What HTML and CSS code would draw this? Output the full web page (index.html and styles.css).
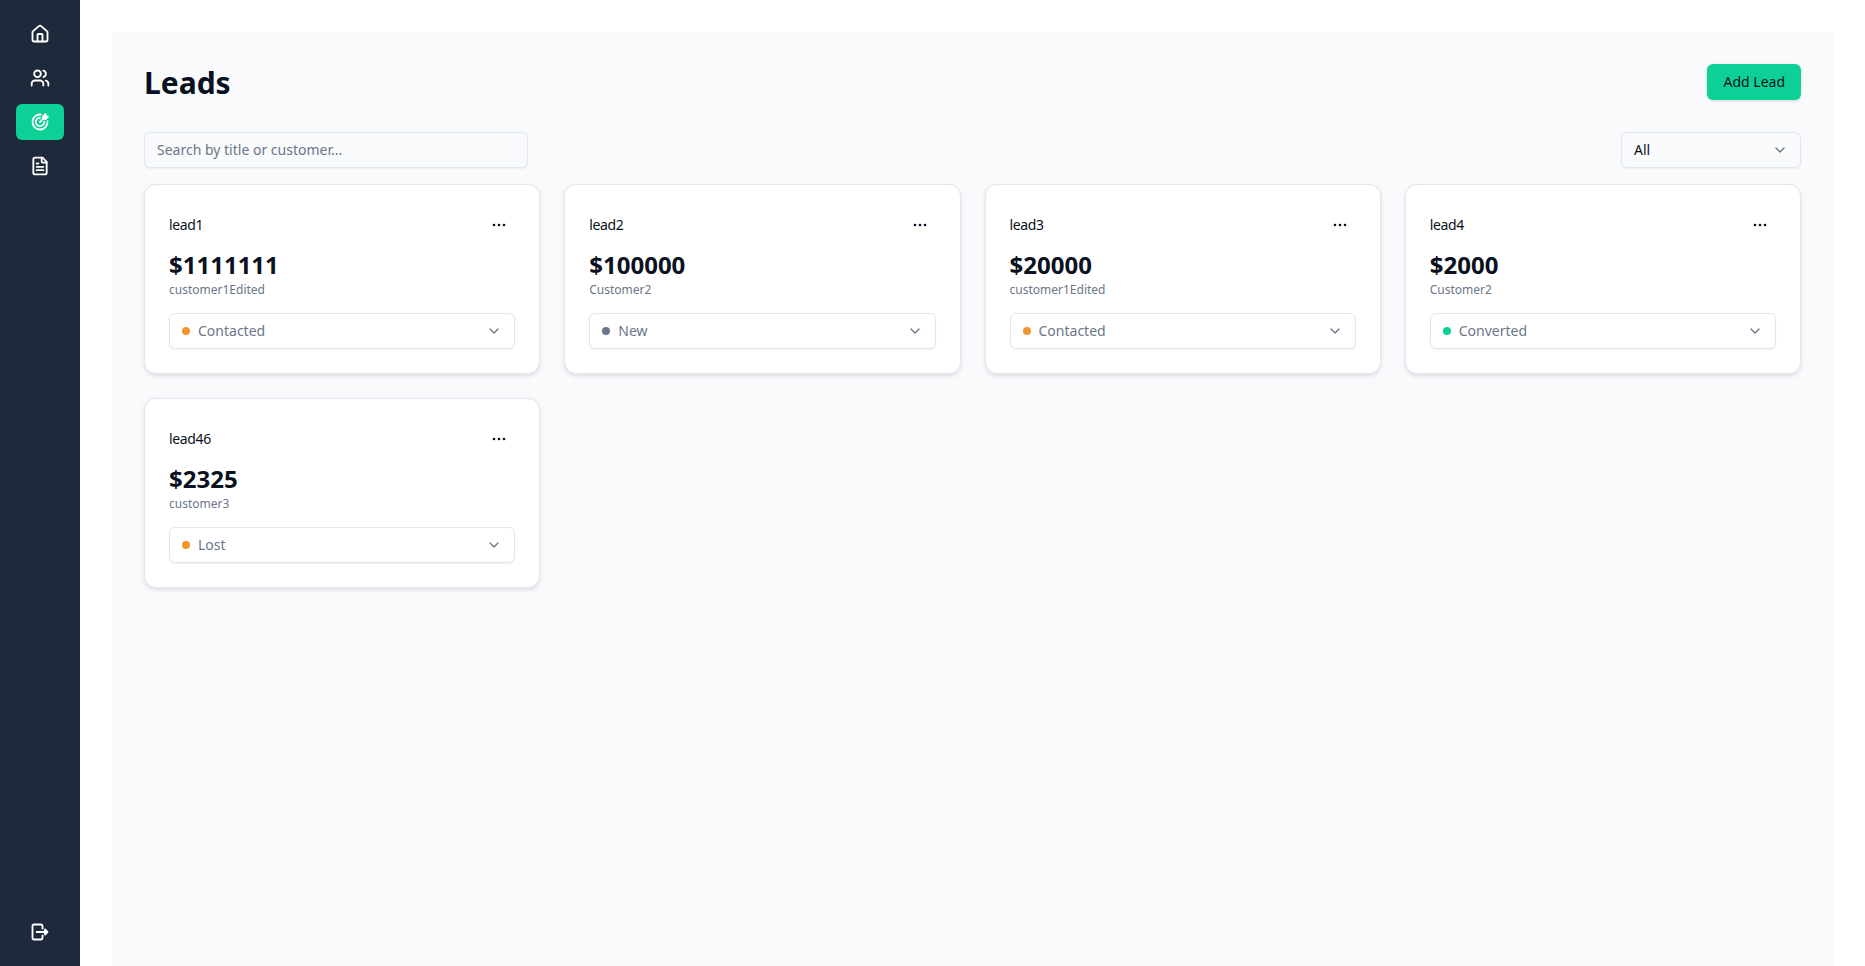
FILE: index.html
```html
<!DOCTYPE html>
<html lang="en">

<head>
    <meta charset="utf-8">
    <meta name="viewport" content="width=device-width, initial-scale=1.0">
    <title>Leads</title>
    <link rel="stylesheet" href="styles.css">
</head>

<body>
    <aside class="sidebar">
        <nav class="side-nav">
            <a class="side-link">
                <svg class="icon" viewBox="0 0 24 24"><path d="M15 21v-8a1 1 0 0 0-1-1h-4a1 1 0 0 0-1 1v8"/><path d="M3 10a2 2 0 0 1 .7-1.5l7-6a2 2 0 0 1 2.6 0l7 6a2 2 0 0 1 .7 1.5v9a2 2 0 0 1-2 2H5a2 2 0 0 1-2-2z"/></svg>
            </a>
            <a class="side-link">
                <svg class="icon" viewBox="0 0 24 24"><path d="M16 21v-2a4 4 0 0 0-4-4H6a4 4 0 0 0-4 4v2"/><circle cx="9" cy="7" r="4"/><path d="M22 21v-2a4 4 0 0 0-3-3.87"/><path d="M16 3.13a4 4 0 0 1 0 7.75"/></svg>
            </a>
            <a class="side-link active">
                <svg class="icon" viewBox="0 0 24 24"><path d="M12 7a5 5 0 1 0 5 5"/><path d="M13 3.05A9 9 0 1 0 20.95 11"/><path class="solid" d="M15.5 5.5l3-3 .6 2.4 2.4.6-3 3-2.5-.5z"/><path d="M12 12l4-4"/></svg>
            </a>
            <a class="side-link">
                <svg class="icon" viewBox="0 0 24 24"><path d="M15 2H6a2 2 0 0 0-2 2v16a2 2 0 0 0 2 2h12a2 2 0 0 0 2-2V7z"/><path d="M14 2v4a2 2 0 0 0 2 2h4"/><path d="M10 9H8"/><path d="M16 13H8"/><path d="M16 17H8"/></svg>
            </a>
        </nav>
        <a class="side-link">
            <svg class="icon" viewBox="0 0 24 24"><path d="M15 8V5a2 2 0 0 0-2-2H5a2 2 0 0 0-2 2v14a2 2 0 0 0 2 2h8a2 2 0 0 0 2-2v-3"/><path d="M8 12h11"/><path class="solid" d="M18 9l3 3-3 3z"/></svg>
        </a>
    </aside>

    <main class="panel">
        <header class="page-head">
            <h1>Leads</h1>
            <button class="add-btn">Add Lead</button>
        </header>

        <div class="filters">
            <input class="search" type="text" placeholder="Search by title or customer...">
            <div class="select filter-select">
                <span>All</span>
                <svg class="chevron" viewBox="0 0 24 24"><path d="M6 9l6 6 6-6"/></svg>
            </div>
        </div>

        <section class="cards">
            <article class="card">
                <div class="card-top">
                    <h2>lead1</h2>
                    <svg class="dots" viewBox="0 0 16 16"><circle cx="3" cy="8" r="1.3"/><circle cx="8" cy="8" r="1.3"/><circle cx="13" cy="8" r="1.3"/></svg>
                </div>
                <p class="amount">$1111111</p>
                <p class="customer">customer1Edited</p>
                <div class="select status">
                    <span class="dot orange"></span>
                    <span class="status-text">Contacted</span>
                    <svg class="chevron" viewBox="0 0 24 24"><path d="M6 9l6 6 6-6"/></svg>
                </div>
            </article>

            <article class="card">
                <div class="card-top">
                    <h2>lead2</h2>
                    <svg class="dots" viewBox="0 0 16 16"><circle cx="3" cy="8" r="1.3"/><circle cx="8" cy="8" r="1.3"/><circle cx="13" cy="8" r="1.3"/></svg>
                </div>
                <p class="amount">$100000</p>
                <p class="customer">Customer2</p>
                <div class="select status">
                    <span class="dot gray"></span>
                    <span class="status-text">New</span>
                    <svg class="chevron" viewBox="0 0 24 24"><path d="M6 9l6 6 6-6"/></svg>
                </div>
            </article>

            <article class="card">
                <div class="card-top">
                    <h2>lead3</h2>
                    <svg class="dots" viewBox="0 0 16 16"><circle cx="3" cy="8" r="1.3"/><circle cx="8" cy="8" r="1.3"/><circle cx="13" cy="8" r="1.3"/></svg>
                </div>
                <p class="amount">$20000</p>
                <p class="customer">customer1Edited</p>
                <div class="select status">
                    <span class="dot orange"></span>
                    <span class="status-text">Contacted</span>
                    <svg class="chevron" viewBox="0 0 24 24"><path d="M6 9l6 6 6-6"/></svg>
                </div>
            </article>

            <article class="card">
                <div class="card-top">
                    <h2>lead4</h2>
                    <svg class="dots" viewBox="0 0 16 16"><circle cx="3" cy="8" r="1.3"/><circle cx="8" cy="8" r="1.3"/><circle cx="13" cy="8" r="1.3"/></svg>
                </div>
                <p class="amount">$2000</p>
                <p class="customer">Customer2</p>
                <div class="select status">
                    <span class="dot green"></span>
                    <span class="status-text">Converted</span>
                    <svg class="chevron" viewBox="0 0 24 24"><path d="M6 9l6 6 6-6"/></svg>
                </div>
            </article>

            <article class="card">
                <div class="card-top">
                    <h2>lead46</h2>
                    <svg class="dots" viewBox="0 0 16 16"><circle cx="3" cy="8" r="1.3"/><circle cx="8" cy="8" r="1.3"/><circle cx="13" cy="8" r="1.3"/></svg>
                </div>
                <p class="amount">$2325</p>
                <p class="customer">customer3</p>
                <div class="select status">
                    <span class="dot orange"></span>
                    <span class="status-text">Lost</span>
                    <svg class="chevron" viewBox="0 0 24 24"><path d="M6 9l6 6 6-6"/></svg>
                </div>
            </article>
        </section>
    </main>
</body>

</html>
```

FILE: styles.css
```css
* {
    box-sizing: border-box;
}

html,
body {
    height: 100%;
}

body {
    margin: 0;
    display: flex;
    overflow: hidden;
    background-color: #fff;
    color: #0a1120;
    font-family: "Noto Sans", "Open Sans", sans-serif;
}

.sidebar {
    display: flex;
    flex-direction: column;
    justify-content: space-between;
    flex: none;
    width: 80px;
    height: 100%;
    padding: 16px;
    background-color: #1e293b;
}

.side-nav {
    display: flex;
    flex-direction: column;
    gap: 8px;
}

.side-link {
    display: flex;
    align-items: center;
    justify-content: center;
    height: 36px;
    border-radius: 6px;
    color: #fff;
}

.side-link.active {
    background-color: #0dd096;
}

.icon {
    width: 20px;
    height: 20px;
    fill: none;
    stroke: currentColor;
    stroke-width: 2.2;
    stroke-linecap: round;
    stroke-linejoin: round;
}

.icon .solid {
    fill: currentColor;
}

.panel {
    flex: 1;
    margin: 32px 32px 0;
    padding: 32px;
    background-color: #f9fafc;
}

.page-head {
    display: flex;
    align-items: center;
    justify-content: space-between;
    height: 36px;
    margin-bottom: 32px;
}

h1 {
    margin: 0;
    padding-top: 2px;
    font-size: 30px;
    font-weight: 700;
    line-height: 36px;
}

.add-btn {
    height: 36px;
    padding: 0 16px 2px;
    border: none;
    border-radius: 6px;
    background-color: #0dd096;
    box-shadow: 0 1px 3px rgba(15, 23, 42, 0.15);
    color: #0a1120;
    font-family: inherit;
    font-size: 14px;
}

.filters {
    display: flex;
    align-items: center;
    justify-content: space-between;
    margin-bottom: 16px;
}

.search {
    width: 384px;
    height: 36px;
    padding: 0 12px 2px;
    border: 1px solid #e2e6ee;
    border-radius: 6px;
    background-color: #f9fafc;
    box-shadow: 0 1px 2px rgba(15, 23, 42, 0.06);
    font-family: inherit;
    font-size: 14px;
}

.search::placeholder {
    color: #6b7689;
    opacity: 1;
}

.select {
    display: flex;
    align-items: center;
    height: 36px;
    padding: 0 12px;
    border: 1px solid #e2e6ee;
    border-radius: 6px;
    box-shadow: 0 1px 2px rgba(15, 23, 42, 0.06);
    font-size: 14px;
    line-height: 18px;
}

.filter-select {
    justify-content: space-between;
    width: 180px;
}

.chevron {
    flex: none;
    width: 16px;
    height: 16px;
    fill: none;
    stroke: #6b7689;
    stroke-width: 2;
    stroke-linecap: round;
    stroke-linejoin: round;
}

.cards {
    display: grid;
    grid-template-columns: repeat(4, 1fr);
    gap: 24px;
}

.card {
    padding: 24px;
    border: 1px solid #e2e6ee;
    border-radius: 12px;
    background-color: #fff;
    box-shadow: 0 2px 4px rgba(15, 23, 42, 0.12);
}

.card-top {
    display: flex;
    align-items: center;
    justify-content: space-between;
    height: 32px;
    margin-bottom: 8px;
    padding-right: 8px;
}

h2 {
    margin: 0;
    font-size: 14px;
    font-weight: 400;
    letter-spacing: -0.025em;
    line-height: 20px;
}

.dots {
    width: 16px;
    height: 16px;
    fill: #0a1120;
}

.amount {
    margin: 0;
    font-size: 24px;
    font-weight: 700;
    line-height: 32px;
}

.customer {
    margin: 0 0 14px;
    color: #6b7689;
    font-size: 12px;
    line-height: 18px;
}

.status {
    gap: 8px;
    background-color: #fff;
}

.status-text {
    flex: 1;
    color: #6b7689;
}

.dot {
    flex: none;
    width: 8px;
    height: 8px;
    border-radius: 50%;
}

.orange {
    background-color: #f0962a;
}

.gray {
    background-color: #6b7689;
}

.green {
    background-color: #0dd096;
}
```
